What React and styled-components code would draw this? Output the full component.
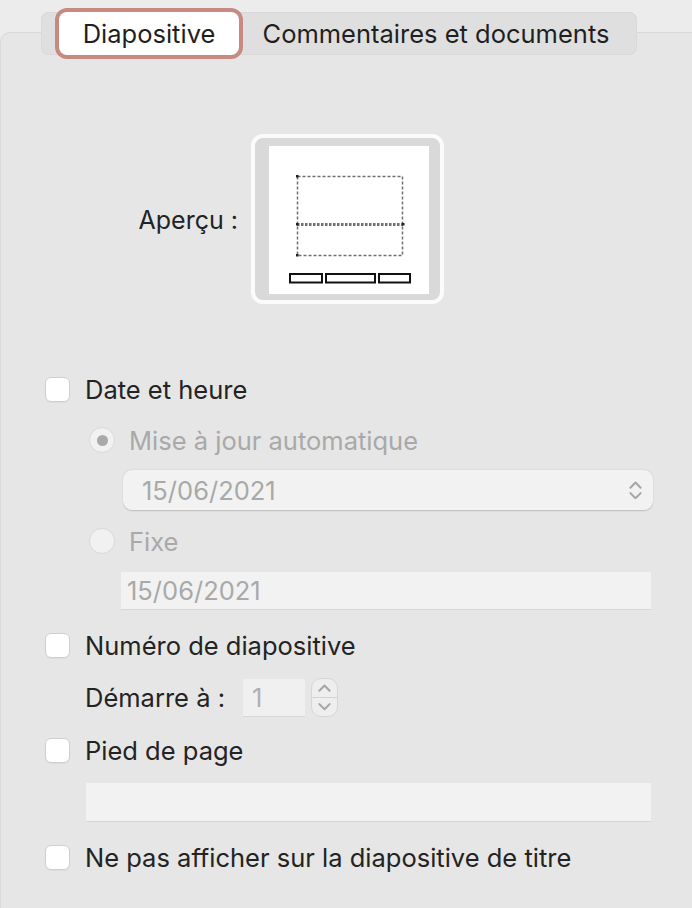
import React from "react";
import styled, { createGlobalStyle } from "styled-components";

const Global = createGlobalStyle`
  body {
    margin: 0;
    background: #ececec;
    font-family: Inter, "Noto Sans", "Liberation Sans", sans-serif;
    color: #232323;
  }
`;

const Page = styled.div`
  width: 692px;
  height: 908px;
  overflow: hidden;
  background: #ececec;
`;

const TabBar = styled.div`
  position: relative;
  z-index: 1;
  display: flex;
  margin: 12px 0 0 41px;
  width: 596px;
  height: 43px;
  border-radius: 8px;
  background: #dfdfdf;
  box-shadow: inset 0 0 0 1px #d9d9d9;
`;

const Tab = styled.div`
  display: flex;
  align-items: center;
  justify-content: center;
  height: 43px;
  width: ${p => p.$w}px;
  margin-left: ${p => p.$ml || 0}px;
  border-radius: 8px;
  font-size: 25.5px;
  color: #1f1f1f;
  background: ${p => (p.$active ? "#fff" : "transparent")};
  box-shadow: ${p => (p.$active ? "0 0 0 4px #c68a80" : "none")};
`;

const Panel = styled.div`
  margin-top: -23px;
  height: 900px;
  background: #e6e6e6;
  border-top: 1px solid #d8d8d8;
  border-left: 1px solid #dadada;
  border-top-left-radius: 10px;
  padding-top: 101px;
  box-sizing: border-box;
`;

const PreviewRow = styled.div`
  display: flex;
  align-items: center;
`;

const PreviewLabel = styled.div`
  width: 237px;
  text-align: right;
  font-size: 25px;
  margin-top: 2px;
`;

const Frame = styled.div`
  margin-left: 13px;
  width: 193px;
  height: 170px;
  box-sizing: border-box;
  border: 4px solid #fbfbfb;
  border-radius: 12px;
  background: #d9d9d9;
  padding: 8px 11px 6px 14px;
`;

const Sheet = styled.svg`
  display: block;
  background: #fff;
`;

const Form = styled.div`
  display: flex;
  flex-direction: column;
  padding-left: 44px;
  margin-top: 72px;
`;

const Row = styled.div`
  display: flex;
  align-items: center;
  height: ${p => p.$h || 26}px;
  margin-top: ${p => p.$mt || 0}px;
  margin-left: ${p => p.$ml || 0}px;
`;

const Box = styled.div`
  width: 25px;
  height: 25px;
  box-sizing: border-box;
  border: 1px solid #cfcfcf;
  border-radius: 6px;
  background: #fff;
  box-shadow: 0 1px 1px rgba(0, 0, 0, 0.04);
  flex-shrink: 0;
`;

const Radio = styled.div`
  width: 26px;
  height: 26px;
  box-sizing: border-box;
  border-radius: 50%;
  border: 1px solid #d9d9d9;
  background: #f1f1f1;
  display: flex;
  align-items: center;
  justify-content: center;
  flex-shrink: 0;

  &::after {
    content: "";
    width: ${p => (p.$on ? 11 : 0)}px;
    height: ${p => (p.$on ? 11 : 0)}px;
    border-radius: 50%;
    background: #a9a9a9;
  }
`;

const Label = styled.span`
  margin-left: ${p => p.$ml ?? 15}px;
  font-size: 25.5px;
  white-space: nowrap;
  color: ${p => (p.$dim ? "#a9a9a9" : "#232323")};
`;

const Select = styled.div`
  display: flex;
  align-items: center;
  justify-content: space-between;
  width: 530px;
  height: 40px;
  margin: ${p => p.$mt}px 0 0 78px;
  padding: 0 11px 0 19px;
  box-sizing: border-box;
  border-radius: 9px;
  background: #f2f2f2;
  box-shadow: 0 0.5px 1.5px rgba(0, 0, 0, 0.18);
  font-size: 25.5px;
  color: #a9a9a9;
`;

const Field = styled.div`
  display: flex;
  align-items: center;
  width: ${p => p.$w}px;
  height: ${p => p.$h || 38}px;
  margin: ${p => p.$mt}px 0 0 ${p => p.$ml}px;
  padding-left: 6px;
  box-sizing: border-box;
  background: #f2f2f2;
  border-bottom: 1px solid #d6d6d6;
  font-size: 25.5px;
  color: #a9a9a9;
`;

const NumberBox = styled.div`
  display: flex;
  align-items: center;
  width: 62px;
  height: 38px;
  margin-left: 18px;
  padding-left: 9px;
  box-sizing: border-box;
  background: #f0f0f0;
  border-bottom: 1px solid #d6d6d6;
  font-size: 25.5px;
  color: #b0b0b0;
`;

const Stepper = styled.div`
  display: flex;
  flex-direction: column;
  width: 27px;
  height: 39px;
  margin-left: 6px;
  box-sizing: border-box;
  border: 1px solid #d6d6d6;
  border-radius: 10px;
  background: #eeeeee;
  overflow: hidden;
`;

const Step = styled.div`
  flex: 1;
  display: flex;
  align-items: center;
  justify-content: center;
  border-top: ${p => (p.$lower ? "1px solid #d3d3d3" : "none")};
`;

const Chevron = ({ up, size = 14 }) => (
  <svg width={size} height={size * 0.6} viewBox="0 0 14 8">
    <path
      d={up ? "M1.5 7 L7 1.5 L12.5 7" : "M1.5 1 L7 6.5 L12.5 1"}
      fill="none"
      stroke="#a6a6a6"
      strokeWidth="2.2"
      strokeLinecap="round"
      strokeLinejoin="round"
    />
  </svg>
);

const Updown = styled.div`
  display: flex;
  flex-direction: column;
  gap: 3px;
`;

export default function App() {
  return (
    <Page>
      <Global />
      <TabBar>
        <Tab $active $w={180} $ml={18}>Diapositive</Tab>
        <Tab $w={394}>Commentaires et documents</Tab>
      </TabBar>
      <Panel>
        <PreviewRow>
          <PreviewLabel>Aperçu :</PreviewLabel>
          <Frame>
            <Sheet width="160" height="148" viewBox="0 0 160 148">
              <rect x="28.5" y="30.5" width="105" height="79" fill="none" stroke="#6f6f6f" strokeWidth="1.5" strokeDasharray="3 2" />
              <line x1="28" y1="78.5" x2="134" y2="78.5" stroke="#6f6f6f" strokeWidth="2.8" strokeDasharray="2.5 1.5" />
              <rect x="27" y="29" width="2.5" height="2.5" fill="#222" />
              <rect x="27" y="77" width="2.5" height="2.5" fill="#222" />
              <rect x="133" y="77" width="2.5" height="2.5" fill="#222" />
              <rect x="27" y="108" width="2.5" height="2.5" fill="#222" />
              <rect x="21" y="128" width="32" height="8.5" fill="none" stroke="#111" strokeWidth="2" />
              <rect x="57" y="128" width="49" height="8.5" fill="none" stroke="#111" strokeWidth="2" />
              <rect x="110" y="128" width="31" height="8.5" fill="none" stroke="#111" strokeWidth="2" />
            </Sheet>
          </Frame>
        </PreviewRow>

        <Form>
          <Row>
            <Box />
            <Label>Date et heure</Label>
          </Row>
          <Row $mt={25} $ml={44}>
            <Radio $on />
            <Label $dim $ml={14}>Mise à jour automatique</Label>
          </Row>
          <Select $mt={17}>
            <span>15/06/2021</span>
            <Updown>
              <Chevron up size={13} />
              <Chevron size={13} />
            </Updown>
          </Select>
          <Row $mt={18} $ml={44}>
            <Radio />
            <Label $dim $ml={14}>Fixe</Label>
          </Row>
          <Field $mt={18} $ml={76} $w={530}>15/06/2021</Field>
          <Row $mt={22}>
            <Box />
            <Label>Numéro de diapositive</Label>
          </Row>
          <Row $mt={20} $h={39} $ml={40}>
            <Label $ml={0}>Démarre à :</Label>
            <NumberBox>1</NumberBox>
            <Stepper>
              <Step><Chevron up size={13} /></Step>
              <Step $lower><Chevron size={13} /></Step>
            </Stepper>
          </Row>
          <Row $mt={20}>
            <Box />
            <Label>Pied de page</Label>
          </Row>
          <Field $mt={20} $ml={41} $w={565} $h={39} />
          <Row $mt={22}>
            <Box />
            <Label>Ne pas afficher sur la diapositive de titre</Label>
          </Row>
        </Form>
      </Panel>
    </Page>
  );
}
